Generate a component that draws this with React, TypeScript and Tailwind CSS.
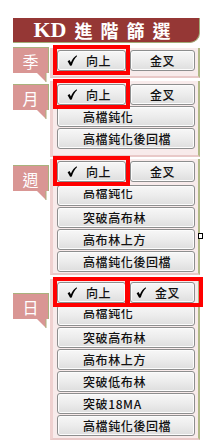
import React from 'react';

const cjk = { fontFamily: '"Noto Sans CJK TC", "Noto Sans", sans-serif' };

function RedBox({ className }: { className: string }) {
  return <span className={`pointer-events-none absolute z-10 border-[4px] border-[#ff0000] ${className}`} />;
}

const pads = {
  left: 'pl-[25px]',
  center: 'justify-center',
  check: 'pl-[9px]',
  check2: 'pl-[5px]',
};

function Btn({
  children,
  align = 'left',
  clipped = false,
}: {
  children: React.ReactNode;
  align?: keyof typeof pads;
  clipped?: boolean;
}) {
  return (
    <div
      className={`relative flex h-[21px] items-center overflow-hidden whitespace-nowrap rounded-[3px] border border-[#8d8e8e] bg-linear-to-b from-[#f7f7f7] via-[#ececec] to-[#dedede] text-[12px] font-medium tracking-[0.6px] text-[#111] shadow-[inset_0_0_0_1px_#fcfcfc] ${pads[align]}`}
      style={cjk}
    >
      {clipped ? (
        <span className="-mt-[4px] block h-[10px] overflow-hidden leading-[12px]">
          <span className="-mt-[2px] block">{children}</span>
        </span>
      ) : (
        <span className="flex shrink-0 items-center whitespace-nowrap leading-none">{children}</span>
      )}
    </div>
  );
}

function Check() {
  return (
    <svg className="mr-[9px]" width="10" height="11" viewBox="0 0 10 11">
      <path d="M0.6 6.2 L2.6 5 L3.9 7.4 C5.2 4.4 7 1.8 9.6 0.2 L10 1.2 C7.6 3.3 5.9 6.5 4.8 10.5 L3.1 10.7 Z" fill="#000" />
    </svg>
  );
}

function Label({ text, top }: { text: string; top: string }) {
  return (
    <div className={`relative w-[36px] shrink-0 ${top}`}>
      <div
        className="flex h-[26px] items-center justify-center border-t border-r border-[#a9b27d] bg-[#d99694] text-[16px] text-white"
        style={cjk}
      >
        {text}
      </div>
      <svg className="absolute left-[24px] top-[26px]" width="10" height="9" viewBox="0 0 10 9">
        <polygon points="0,0 9,0 9,9" fill="#d99694" />
        <line x1="9" y1="0" x2="9" y2="9" stroke="#a9b27d" strokeWidth="1" />
      </svg>
    </div>
  );
}

function Panel({ children, className = '' }: { children: React.ReactNode; className?: string }) {
  return (
    <div
      className={`ml-[1px] flex w-[150px] flex-col gap-[1px] border-l-[3px] border-r-[2px] border-b-[2px] border-l-[#efd1d0] border-r-[#b1b986] border-b-[#e9c9c8] bg-[#f8ebeb] pl-[4px] pr-[3px] ${className}`}
    >
      {children}
    </div>
  );
}

function TopRow({ both = false }: { both?: boolean }) {
  return (
    <div className="flex gap-[4px]">
      <div className="relative w-[69px] shrink-0">
        <Btn align="check">
          <Check />
          向上
        </Btn>
        <RedBox className="-left-[4px] -right-[4px] -top-[5px] -bottom-[4px]" />
      </div>
      <div className="relative flex-1">
        {both ? (
          <>
            <Btn align="check2">
              <Check />
              金叉
            </Btn>
            <RedBox className="-left-[5px] -right-[8px] -top-[5px] -bottom-[4px]" />
          </>
        ) : (
          <Btn align="center">金叉</Btn>
        )}
      </div>
    </div>
  );
}

export default function App() {
  return (
    <div className="relative h-[444px] w-[213px] overflow-hidden bg-white pl-[13px] pt-[18px]">
      {/* header */}
      <div className="flex h-[25px] w-[187px] items-center justify-center rounded-br-[10px] border-r border-b border-[#a2ab78] bg-[#953735] text-white">
        <span className="mr-[8px] text-[22px] font-bold leading-none" style={{ fontFamily: '"Liberation Serif", serif' }}>
          KD
        </span>
        <span className="text-[18px] font-bold leading-none tracking-[8px]" style={cjk}>
          進階篩選
        </span>
      </div>

      {/* 季 */}
      <div className="mt-[5px] flex items-start">
        <Label text="季" top="-mt-[1px]" />
        <Panel className="pt-[2px] pb-[5px]">
          <TopRow />
        </Panel>
      </div>

      {/* 月 */}
      <div className="mt-[3px] flex items-start">
        <Label text="月" top="mt-[3px]" />
        <Panel className="pt-[3px] pb-[6px]">
          <TopRow />
          <Btn>高檔鈍化</Btn>
          <Btn>高檔鈍化後回檔</Btn>
        </Panel>
      </div>

      {/* 週 */}
      <div className="mt-[2px] flex items-start">
        <Label text="週" top="mt-[6px]" />
        <Panel className="pt-[2px] pb-[1px]">
          <div className="mb-[2px]">
            <TopRow />
          </div>
          <Btn clipped>高檔鈍化</Btn>
          <Btn>突破高布林</Btn>
          <Btn>高布林上方</Btn>
          <Btn>高檔鈍化後回檔</Btn>
        </Panel>
      </div>

      {/* 日 */}
      <div className="mt-[4px] flex items-start">
        <Label text="日" top="mt-[14px]" />
        <Panel className="pt-[3px] pb-[2px]">
          <div className="mb-[1px]">
            <TopRow both />
          </div>
          <Btn clipped>高檔鈍化</Btn>
          <Btn>突破高布林</Btn>
          <Btn>高布林上方</Btn>
          <Btn>突破低布林</Btn>
          <Btn>突破18MA</Btn>
          <Btn>高檔鈍化後回檔</Btn>
        </Panel>
      </div>

      <span className="absolute left-[198px] top-[233px] h-[6px] w-[5px] border border-black bg-white" />
    </div>
  );
}
